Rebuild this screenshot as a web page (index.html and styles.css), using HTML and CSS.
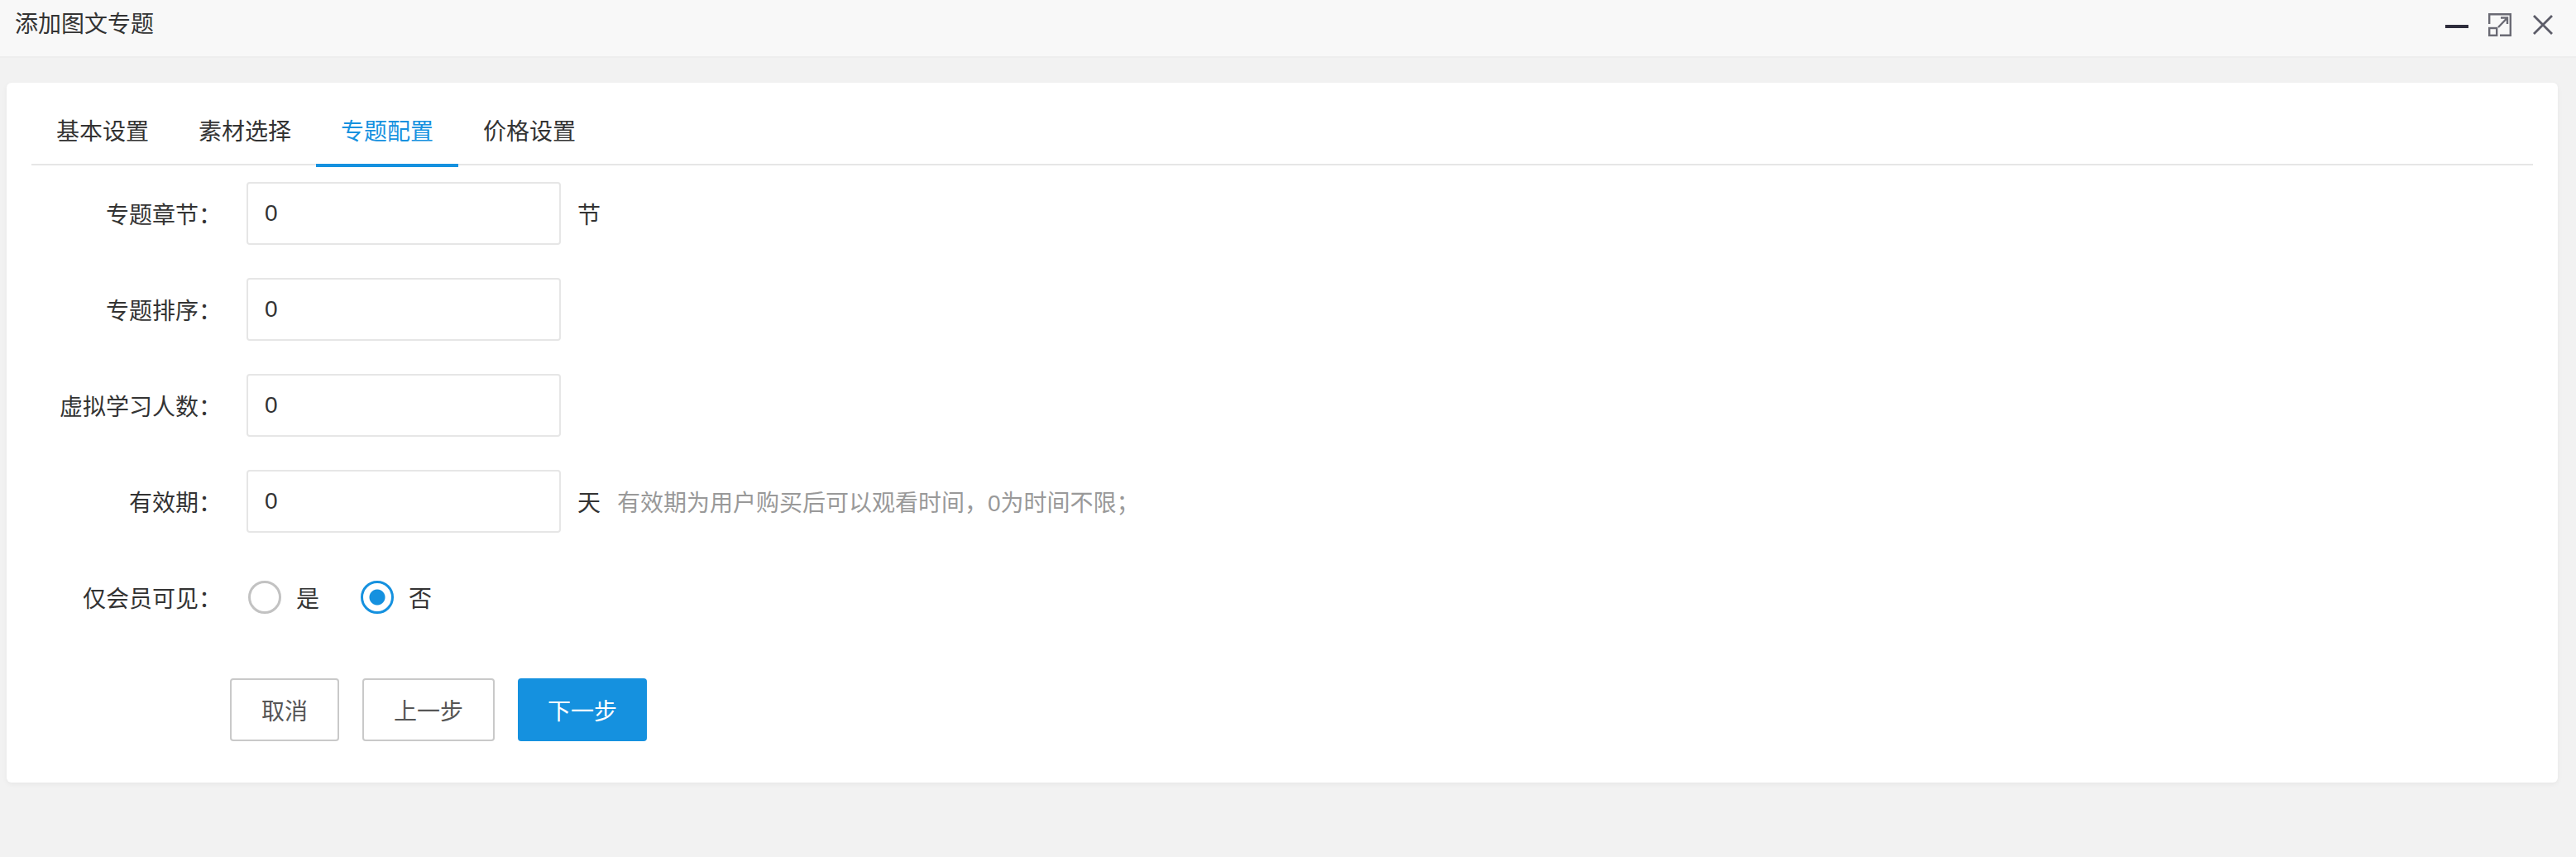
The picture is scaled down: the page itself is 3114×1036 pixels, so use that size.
FILE: index.html
```html
<!DOCTYPE html>
<html lang="zh-CN">
<head>
    <meta charset="UTF-8">
    <meta name="viewport" content="width=device-width, initial-scale=1.0">
    <title>添加图文专题</title>
    <link rel="stylesheet" href="styles.css">
</head>
<body>
    <div class="title-bar">
        <span class="title-text">添加图文专题</span>
        <div class="win-btns">
            <svg class="win-icon" width="28" height="28" viewBox="0 0 28 28">
                <rect x="0" y="14" width="28" height="4" fill="#2e2d3c"/>
            </svg>
            <svg class="win-icon" width="28" height="28" viewBox="0 0 28 28" fill="none" stroke="#6a6a74" stroke-width="2.4">
                <path d="M1.2 13V1.2H26.8V26.8H14"/>
                <rect x="1.2" y="18" width="9" height="8.8"/>
                <path d="M12 17L23 5.5M15 5.5H23V13"/>
            </svg>
            <svg class="win-icon" width="28" height="28" viewBox="0 0 28 28" fill="none" stroke="#5c5c68" stroke-width="2.8">
                <path d="M3 3L25 25M25 3L3 25"/>
            </svg>
        </div>
    </div>

    <div class="card">
        <ul class="tabs">
            <li class="tab">基本设置</li>
            <li class="tab">素材选择</li>
            <li class="tab active">专题配置</li>
            <li class="tab">价格设置</li>
        </ul>

        <form class="form">
            <div class="form-row">
                <label class="form-label">专题章节：</label>
                <input class="input-field" type="text" value="0">
                <span class="unit">节</span>
            </div>
            <div class="form-row">
                <label class="form-label">专题排序：</label>
                <input class="input-field" type="text" value="0">
            </div>
            <div class="form-row">
                <label class="form-label">虚拟学习人数：</label>
                <input class="input-field" type="text" value="0">
            </div>
            <div class="form-row">
                <label class="form-label">有效期：</label>
                <input class="input-field" type="text" value="0">
                <span class="unit">天</span>
                <span class="hint">有效期为用户购买后可以观看时间，0为时间不限；</span>
            </div>
            <div class="form-row">
                <label class="form-label">仅会员可见：</label>
                <div class="radio-group">
                    <label class="radio-item"><input class="radio" type="radio" name="vip">是</label>
                    <label class="radio-item"><input class="radio" type="radio" name="vip" checked>否</label>
                </div>
            </div>
            <div class="form-actions">
                <button type="button" class="btn">取消</button>
                <button type="button" class="btn">上一步</button>
                <button type="button" class="btn btn-primary">下一步</button>
            </div>
        </form>
    </div>
</body>
</html>
```

FILE: styles.css
```css
* {
    box-sizing: border-box;
}

body {
    margin: 0;
    height: 1036px;
    overflow: hidden;
    background-color: #f2f2f2;
    color: #333;
    font-family: "Liberation Sans", "Noto Sans CJK SC", sans-serif;
    font-size: 28px;
}

.title-bar {
    height: 70px;
    padding: 0 26px 14px 18px;
    display: flex;
    justify-content: space-between;
    align-items: center;
    background-color: #f8f8f8;
    border-bottom: 2px solid #eee;
}

.win-btns {
    display: flex;
    align-items: center;
    gap: 24px;
    padding-top: 6px;
}

.win-icon {
    display: block;
}

.card {
    margin: 30px 22px 0 8px;
    height: 846px;
    padding: 20px 30px 0;
    background-color: #fff;
    border-radius: 6px;
    box-shadow: 0 2px 6px rgba(0, 0, 0, 0.05);
}

.tabs {
    display: flex;
    margin: 0;
    padding: 0;
    list-style: none;
    height: 80px;
    border-bottom: 2px solid #e6e6e6;
}

.tab {
    position: relative;
    height: 80px;
    padding: 0 30px;
    line-height: 80px;
}

.tab.active {
    color: #1591df;
}

.tab.active::after {
    content: "";
    position: absolute;
    left: 0;
    right: 0;
    bottom: -2px;
    height: 4px;
    background-color: #1591df;
}

.form {
    padding-top: 20px;
}

.form-row {
    display: flex;
    align-items: center;
    height: 76px;
    margin-bottom: 40px;
}

.form-label {
    width: 260px;
    padding-right: 30px;
    text-align: right;
    white-space: nowrap;
}

.input-field {
    width: 380px;
    height: 76px;
    padding: 0 20px;
    background-color: #fff;
    border: 2px solid #e6e6e6;
    border-radius: 4px;
    color: #333;
    font: inherit;
    outline: none;
}

.unit {
    margin-left: 20px;
}

.hint {
    margin-left: 20px;
    color: #999;
}

.radio-group {
    display: flex;
    margin-left: 2px;
    gap: 50px;
}

.radio-item {
    display: flex;
    align-items: center;
    gap: 18px;
}

.radio {
    appearance: none;
    display: block;
    width: 40px;
    height: 40px;
    margin: 0;
    border: 3px solid #c2c2c2;
    border-radius: 50%;
    background-color: #fff;
}

.radio:checked {
    border-color: #1591df;
    background: radial-gradient(circle, #1591df 9px, #fff 10px);
}

.form-actions {
    display: flex;
    gap: 28px;
    margin-top: 60px;
    padding-left: 240px;
}

.btn {
    height: 76px;
    padding: 0 36px;
    background-color: #fff;
    border: 2px solid #c9c9c9;
    border-radius: 4px;
    color: #555;
    font: inherit;
    cursor: pointer;
}

.btn-primary {
    background-color: #1591df;
    border: none;
    color: #fff;
}
```
